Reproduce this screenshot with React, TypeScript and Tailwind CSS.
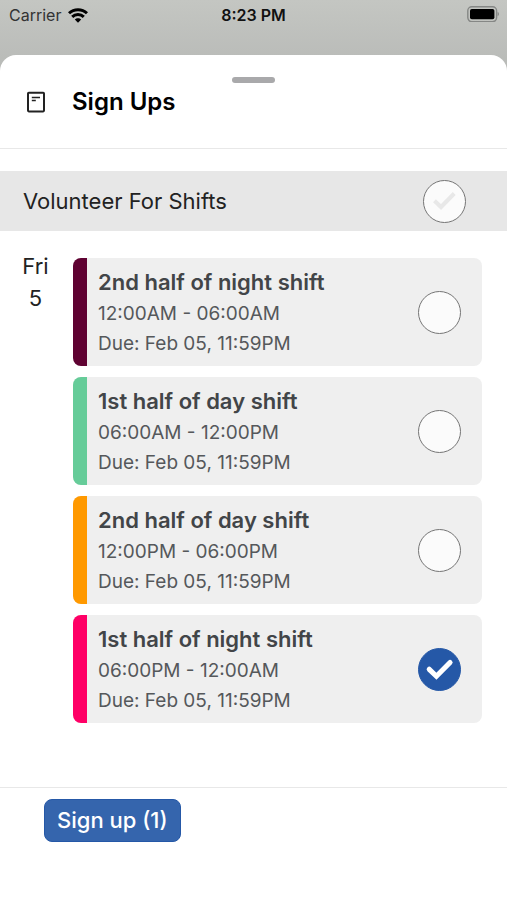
import { useState } from "react";

interface Shift {
  id: string;
  title: string;
  time: string;
  due: string;
  color: string;
}

const shifts: Shift[] = [
  { id: "night-2", title: "2nd half of night shift", time: "12:00AM - 06:00AM", due: "Feb 05, 11:59PM", color: "bg-[#5f0232]" },
  { id: "day-1", title: "1st half of day shift", time: "06:00AM - 12:00PM", due: "Feb 05, 11:59PM", color: "bg-[#66cc99]" },
  { id: "day-2", title: "2nd half of day shift", time: "12:00PM - 06:00PM", due: "Feb 05, 11:59PM", color: "bg-[#ff9900]" },
  { id: "night-1", title: "1st half of night shift", time: "06:00PM - 12:00AM", due: "Feb 05, 11:59PM", color: "bg-[#ff0066]" },
];

function StatusBar() {
  return (
    <div className="grid h-[55px] grid-cols-3 items-start px-2 pt-1 text-[#111]">
      <div className="flex h-[22px] items-center gap-[7px] pl-px text-base text-[#333]">
        <span>Carrier</span>
        <svg className="h-[15px] w-5 text-black" viewBox="0 0 20 15" fill="none" stroke="currentColor" strokeWidth="3">
          <path d="M1 5.3C6 .4 14 .4 19 5.3" />
          <path d="M4.2 8.9c3.2-3.1 8.4-3.1 11.6 0" />
          <path d="M10 14.8 6.8 11.6c1.7-1.7 4.7-1.7 6.4 0z" fill="currentColor" stroke="none" />
        </svg>
      </div>
      <div className="h-[22px] text-center text-base leading-[22px] font-semibold">8:23 PM</div>
      <svg className="mt-[2px] h-4 w-[33px] justify-self-end" viewBox="0 0 33 16" fill="none">
        <rect x="1.8" y=".8" width="28.8" height="14.8" rx="4" stroke="#858785" strokeWidth="1.4" />
        <rect x="4" y="3" width="24.4" height="10.2" rx="1.8" fill="#000" />
        <path d="M31.6 6c1.8.6 1.8 3.6 0 4.2z" fill="#858785" />
      </svg>
    </div>
  );
}

// Marca de verificación redonda
function RoundCheck({ label, checked, onChange, muted = false }: {
  label: string;
  checked: boolean;
  onChange: () => void;
  muted?: boolean;
}) {
  return (
    <span className="relative block size-[43px] shrink-0">
      <input
        type="checkbox"
        aria-label={label}
        checked={checked}
        onChange={onChange}
        className="block size-full cursor-pointer appearance-none rounded-full border border-[#757575] bg-[#fbfbfb] checked:border-[#2558a7] checked:bg-[#2558a7]"
      />
      {(checked || muted) && (
        <svg
          className={checked ? "pointer-events-none absolute inset-0 text-white" : "pointer-events-none absolute inset-0 text-[#e8e8e8]"}
          viewBox="0 0 42 42"
          fill="none"
          stroke="currentColor"
          strokeWidth={checked ? 5 : 4}
          strokeLinecap={checked ? "round" : "butt"}
        >
          {checked ? <path d="M11 20.8 18 27.6 31.3 14.2" /> : <path d="M11.2 20.2 17.6 26.4 30.5 13.2" />}
        </svg>
      )}
    </span>
  );
}

export default function App() {
  const [selected, setSelected] = useState<string[]>(["night-1"]);
  const allSelected = selected.length === shifts.length;

  const toggle = (id: string) => {
    setSelected((prev) => (prev.includes(id) ? prev.filter((s) => s !== id) : [...prev, id]));
  };

  const toggleAll = () => setSelected(allSelected ? [] : shifts.map((s) => s.id));

  return (
    <div className="flex min-h-screen flex-col bg-linear-to-b from-[#c4c6c2] to-[#b8bab7] to-[70px] font-['Inter','Liberation_Sans',sans-serif]">
      <StatusBar />

      <main className="flex grow flex-col rounded-t-2xl bg-white">
        {/* Encabezado */}
        <header className="border-b border-[#e8e8e8] pb-[31px]">
          <div className="mx-auto mt-[22px] h-[6px] w-[43px] rounded-full bg-[#a9a9ab]" />
          <div className="mt-1 flex h-[30px] items-center gap-[26px] px-[26px]">
            <svg className="h-[22px] w-5" viewBox="0 0 20 22" fill="none" stroke="#222" strokeWidth="2">
              <rect x="2" y="1.8" width="16" height="18.6" rx=".8" />
              <path d="M5.8 6.5H14M5.8 9.5H9.8" strokeWidth="1.7" />
            </svg>
            <h1 className="text-2xl leading-[30px] font-semibold text-black">Sign Ups</h1>
          </div>
        </header>

        {/* Seleccionar todos */}
        <div className="mt-[22px] flex h-[60px] items-center justify-between bg-[#e7e7e7] pr-[41px] pl-[23px]">
          <h2 className="text-[22px] text-[#222]">Volunteer For Shifts</h2>
          <RoundCheck label="Volunteer For Shifts" checked={allSelected} onChange={toggleAll} muted />
        </div>

        <section className="flex pt-[27px] pr-[25px] pb-[64px]">
          <div className="w-[73px] shrink-0 pr-6 pl-[22px] text-center text-[22px] leading-8 text-[#222]">
            <div className="-mt-2">Fri</div>
            <div>5</div>
          </div>
          <ul className="flex grow flex-col gap-[11px]">
            {shifts.map((shift) => (
              <li key={shift.id} className="flex h-[108px] overflow-hidden rounded-lg bg-[#efefef]">
                <div className={`w-[14px] shrink-0 ${shift.color}`} />
                <div className="flex grow items-center justify-between pr-[21px] pl-[11px]">
                  <div className="text-[19px] leading-[30px] text-[#55585b]">
                    <h3 className="text-[22px] leading-[34px] font-semibold text-[#424548]">{shift.title}</h3>
                    <p>{shift.time}</p>
                    <p>Due: {shift.due}</p>
                  </div>
                  <RoundCheck
                    label={shift.title}
                    checked={selected.includes(shift.id)}
                    onChange={() => toggle(shift.id)}
                  />
                </div>
              </li>
            ))}
          </ul>
        </section>

        <footer className="border-t border-[#e8e8e8] px-11 pt-[11px]">
          <button
            type="button"
            className="h-[43px] rounded-lg border border-[#2558a7] bg-[#3565ad] px-3 text-[22px] font-medium text-white"
          >
            Sign up ({selected.length})
          </button>
        </footer>
      </main>
    </div>
  );
}
